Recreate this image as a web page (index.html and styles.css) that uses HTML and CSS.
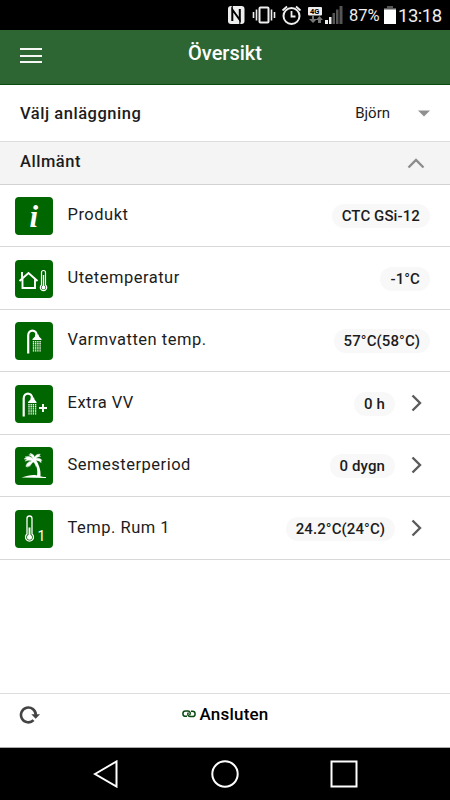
FILE: index.html
```html
<!DOCTYPE html>
<html lang="sv">
	<head>
		<meta charset="utf-8"/>
		<title>Översikt</title>
		<link rel="stylesheet" href="styles.css">
	</head>
	<body>
	<div class="statusbar">
		<svg class="status-icons" width="118" height="30" viewBox="0 0 118 30">
			<!-- nfc -->
			<rect x="1" y="6" width="16.500" height="18" rx="3" fill="#eee"/>
			<path d="M5.300 21V9.500L12.800 20V9" fill="none" stroke="#000" stroke-width="2"/>
			<path d="M5.300 6v5M12.800 18.500V24" stroke="#000" stroke-width="1"/>
			<!-- vibrate -->
			<rect x="32.500" y="7.500" width="9" height="15" rx="1" fill="none" stroke="#eee" stroke-width="2"/>
			<path d="M29.500 9.500v11M44.500 9.500v11M26.500 12v6M47.500 12v6" stroke="#eee" stroke-width="1.600"/>
			<!-- alarm -->
			<circle cx="64.500" cy="16" r="8" fill="none" stroke="#eee" stroke-width="2"/>
			<path d="M64.500 11V16.500H68.500M55.500 10.500L60 6.500M73.500 10.500L69 6.500" fill="none" stroke="#eee" stroke-width="1.800"/>
			<!-- 4g -->
			<rect x="81" y="7" width="14" height="8.500" rx="1" fill="#eee"/>
			<text class="net" x="83" y="14">4G</text>
			<path d="M85 16v3h-3l4 4 4-4h-3v-3zM91 23v-3h-2l3.500-4 3.500 4h-2v3z" fill="#777"/>
			<path d="M98 20h3v4h-3zM102 17h2.500v7H102z" fill="#eee"/>
			<path d="M105.500 13h2.500v11h-2.500zM109 9.500h2.500V24H109zM112.500 6h3v18h-3z" fill="#555"/>
		</svg>
		<span class="percent">87%</span>
		<svg class="battery" width="12" height="18" viewBox="0 0 12 18"><path d="M3 0h6v2h3v2H0V2h3z" fill="#555"/><path d="M0 3.500h12V18H0z" fill="#fff"/></svg>
		<span class="clock">13:18</span>
	</div>

	<div class="header">
		<div class="menu"><i></i><i></i><i></i></div>
		<h1>Översikt</h1>
	</div>

	<div class="facility">
		<b>Välj anläggning</b>
		<span class="selected">Björn</span>
		<svg width="12" height="7" viewBox="0 0 12 7"><path d="M0 0.500h12L6 6.500z" fill="#909090"/></svg>
	</div>
	<div class="section">
		<b>Allmänt</b>
		<svg width="18" height="11" viewBox="0 0 18 11"><path d="M1.500 9.500L9 2l7.500 7.500" fill="none" stroke="#8c8c8c" stroke-width="2.400"/></svg>
	</div>

	<ul class="list">
		<li>
			<svg class="icon" viewBox="0 0 38 38">
				<text class="info" x="14.500" y="30">i</text>
			</svg>
			<span class="label">Produkt</span>
			<span class="badge">CTC GSi-12</span>
		</li>
		<li>
			<svg class="icon" viewBox="0 0 38 38">
				<path d="M4.500 21L13.500 13l9 8M7.500 19v9h12.500V19M7 18.500v-6.500" fill="none" stroke="#fff" stroke-width="1.900"/>
				<path d="M26.500 25V12.500a2 2 0 0 1 4 0V25a3.200 3.200 0 1 1-4 0z" fill="none" stroke="#fff" stroke-width="1.200"/>
				<path d="M28.500 15v11" stroke="#fff" stroke-width="1.300"/>
				<circle cx="28.500" cy="27.500" r="1.900" fill="#fff"/>
			</svg>
			<span class="label">Utetemperatur</span>
			<span class="badge">-1°C</span>
		</li>
		<li>
			<svg class="icon" viewBox="0 0 38 38">
				<path d="M13.200 31.500V13.500c0-6.500 8.500-6.500 8.500 0" fill="none" stroke="#fff" stroke-width="2.200"/>
				<path d="M20 12.500h3.500l.5 2 2.500 2.500v1H17.500v-1l2.500-2.500z" fill="#fff"/>
				<path d="M18.500 19v11M20.700 19v11M22.900 19v11M25.100 19v11" stroke="#fff" stroke-width="1.300" stroke-dasharray="1.400 .7"/>
			</svg>
			<span class="label">Varmvatten temp.</span>
			<span class="badge">57°C(58°C)</span>
		</li>
		<li>
			<svg class="icon" viewBox="0 0 38 38">
				<path d="M8.700 31.500V13.500c0-6.500 8.500-6.500 8.500 0" fill="none" stroke="#fff" stroke-width="2.200"/>
				<path d="M15.500 12.500H19l.5 2L21.500 17v1H13v-1l2.500-2.500z" fill="#fff"/>
				<path d="M14 19v11M16.200 19v11M18.400 19v11M20.600 19v11" stroke="#fff" stroke-width="1.300" stroke-dasharray="1.400 .7"/>
				<path d="M24 23h8M28 19v8" stroke="#fff" stroke-width="1.900"/>
			</svg>
			<span class="label">Extra VV</span>
			<span class="badge">0 h</span>
			<svg class="arrow" viewBox="0 0 11 18"><path d="M1.500 1.500L9 9l-7.500 7.500"/></svg>
		</li>
		<li>
			<svg class="icon" viewBox="0 0 38 38">
				<path d="M6.500 30.500c5-1.500 8-2.500 12-2.500s7 2 12.500 2v1z" fill="#fff"/>
				<path d="M18.500 13c3 5 4.500 10 3.500 16h3.500c.5-6.500-1.800-12-5.300-16z" fill="#fff"/>
				<path d="M18.500 13c-1.500-3-4.500-4.500-8.500-3l2 .5-3 1.500 3 .2-2 2c3-1.200 5-1.200 7-.2-4 .5-6 2.500-6 6l1.500-1.200.2 1.500 1.800-2.300.2 1.500c1-2 2-3.500 4-4.500 1 1.500 1.800 2.500 2.300 4.500l.7-1.500 1 1c.5-2.500-.5-4-2-5.500 2-.2 3.800.5 5.500 2.200 0-1-.2-1.500-.7-2.200h1.500c-1.200-2-3.500-2.500-6-2 1-1.500 2.500-2 4.500-2l-1.200-1 1-1.200c-3-.7-5 1-5.800 3.200-.2-2-1.500-3.500-4.500-4.200l.8 1.500-2 0c2.500 1.200 3.700 2.700 4.700 5.200z" fill="#fff" stroke="#fff" stroke-width=".4"/>
			</svg>
			<span class="label">Semesterperiod</span>
			<span class="badge">0 dygn</span>
			<svg class="arrow" viewBox="0 0 11 18"><path d="M1.500 1.500L9 9l-7.500 7.500"/></svg>
		</li>
		<li>
			<svg class="icon" viewBox="0 0 38 38">
				<path d="M12 24V8.500a2.500 2.500 0 0 1 5 0V24a4 4 0 1 1-5 0z" fill="none" stroke="#fff" stroke-width="1.300"/>
				<path d="M14.500 17.500V26" stroke="#fff" stroke-width="1.900"/>
				<circle cx="14.500" cy="27.200" r="2.500" fill="#fff"/>
				<text class="room" x="22.500" y="31">1</text>
			</svg>
			<span class="label">Temp. Rum 1</span>
			<span class="badge">24.2°C(24°C)</span>
			<svg class="arrow" viewBox="0 0 11 18"><path d="M1.500 1.500L9 9l-7.500 7.500"/></svg>
		</li>
	</ul>

	<div class="footer">
		<svg width="21" height="20" viewBox="0 0 21 20">
			<path d="M14.600 15.200A7.400 7.400 0 1 1 16.800 10" fill="none" stroke="#444" stroke-width="2.600"/>
			<path d="M12.300 9.200h8.700l-4.300 4.500z" fill="#444"/>
		</svg>
		<div class="status">
			<svg width="14" height="8" viewBox="0 0 14 8">
				<path d="M5 6.300H3.500a2.600 2.600 0 0 1 0-5.200H6a2.300 2.300 0 0 1 1.500 4M9 1.300h1.500a2.600 2.600 0 0 1 0 5.200H8a2.300 2.300 0 0 1-1.500-4" fill="none" stroke="#0b4a12" stroke-width="1.500"/>
			</svg>
			<span>Ansluten</span>
		</div>
	</div>

	<div class="navbar">
		<svg width="26" height="28" viewBox="0 0 26 28"><path d="M2 14L23.500 1.500v25z"/></svg>
		<svg width="28" height="28" viewBox="0 0 28 28"><circle cx="14" cy="14" r="12.700"/></svg>
		<svg width="28" height="28" viewBox="0 0 28 28"><path d="M1.500 1.500h25v25h-25z"/></svg>
	</div>
	</body>
</html>
```

FILE: styles.css
```css
*{box-sizing:border-box;}
body{margin:0; width:450px; height:800px; overflow:hidden; display:flex; flex-direction:column; background:#fff; color:#1c1c1c; font-family:Roboto, "Liberation Sans", sans-serif;}
svg{display:block; flex:none;}
b{font-weight:500;}

.statusbar{height:30px; flex:none; background:#000; color:#eee; display:flex; align-items:center; justify-content:flex-end; padding-right:8px;}
.status-icons{margin-right:4px;}
.net{font-size:7.500px; font-weight:700;}
.percent{width:35px; font-size:16.500px; line-height:30px; padding-top:2px; white-space:nowrap;}
.battery{margin:0 2px 0 0;}
.clock{width:44px; font-size:18.500px; letter-spacing:-0.500px; line-height:30px; padding-top:1px; white-space:nowrap;}

.header{height:55px; flex:none; background:#2d6633; border-bottom:1px solid #0c4a10; display:grid; grid-template-columns:1fr auto 1fr; padding:0 20px;}
.header h1{margin:0; padding-top:11px; font-size:20px; line-height:24px; font-weight:500; color:#fff;}
.menu{width:22px; padding-top:18px; display:flex; flex-direction:column; gap:4.500px;}
.menu i{height:2px; background:#f4f7f4;}

.facility{height:57px; flex:none; display:flex; align-items:center; padding:0 20px; border-bottom:1px solid #ddd;}
.facility b,.section b{font-size:16.500px; letter-spacing:0.530px;}
.facility .selected{margin-left:auto; margin-right:28px; font-size:15px;}
.section{height:42.500px; flex:none; display:flex; align-items:center; justify-content:space-between; padding:0 25px 2px 20px; background:#f4f4f4; border-bottom:1px solid #d2d2d2;}
.section svg{margin-top:3px;}

.list{list-style:none; margin:0; padding:0; flex:1;}
.list li{height:62.500px; display:flex; align-items:center; padding:0 20px 0 15px; border-bottom:1px solid #d8d8d8;}
.icon{width:38px; height:38px; margin-top:2px; background:#060; border-radius:4px;}
.icon text{fill:#fff;}
.info{font:italic bold 31px "Liberation Serif", serif;}
.room{font:14px Roboto, sans-serif;}
.label{margin-left:14.500px; margin-right:auto; padding-bottom:1px; font-size:16.500px; letter-spacing:0.500px;}
.badge{height:24px; margin-top:2px; padding:0 10px; border-radius:12px; background:#f8f8f8; font-size:15px; line-height:24px; font-weight:500; letter-spacing:0.100px; white-space:nowrap;}
.arrow{width:11px; height:18px; margin-left:16px; margin-right:8px;}
.arrow path{fill:none; stroke:#5c5c5c; stroke-width:2.400;}

.footer{height:55px; flex:none; border-top:1px solid #ddd; border-bottom:1px solid #aaa; display:grid; grid-template-columns:1fr auto 1fr; padding:11px 19px 0 19px; align-items:start;}
.status{display:flex; align-items:center; gap:4px; font-size:17px; line-height:18px; font-weight:500; letter-spacing:0.200px; color:#000;}

.navbar{height:52px; flex:none; background:#000; display:flex; justify-content:space-between; align-items:center; padding:0 92px 0 93px;}
.navbar path,.navbar circle{fill:none; stroke:#fff; stroke-width:2;}
```
